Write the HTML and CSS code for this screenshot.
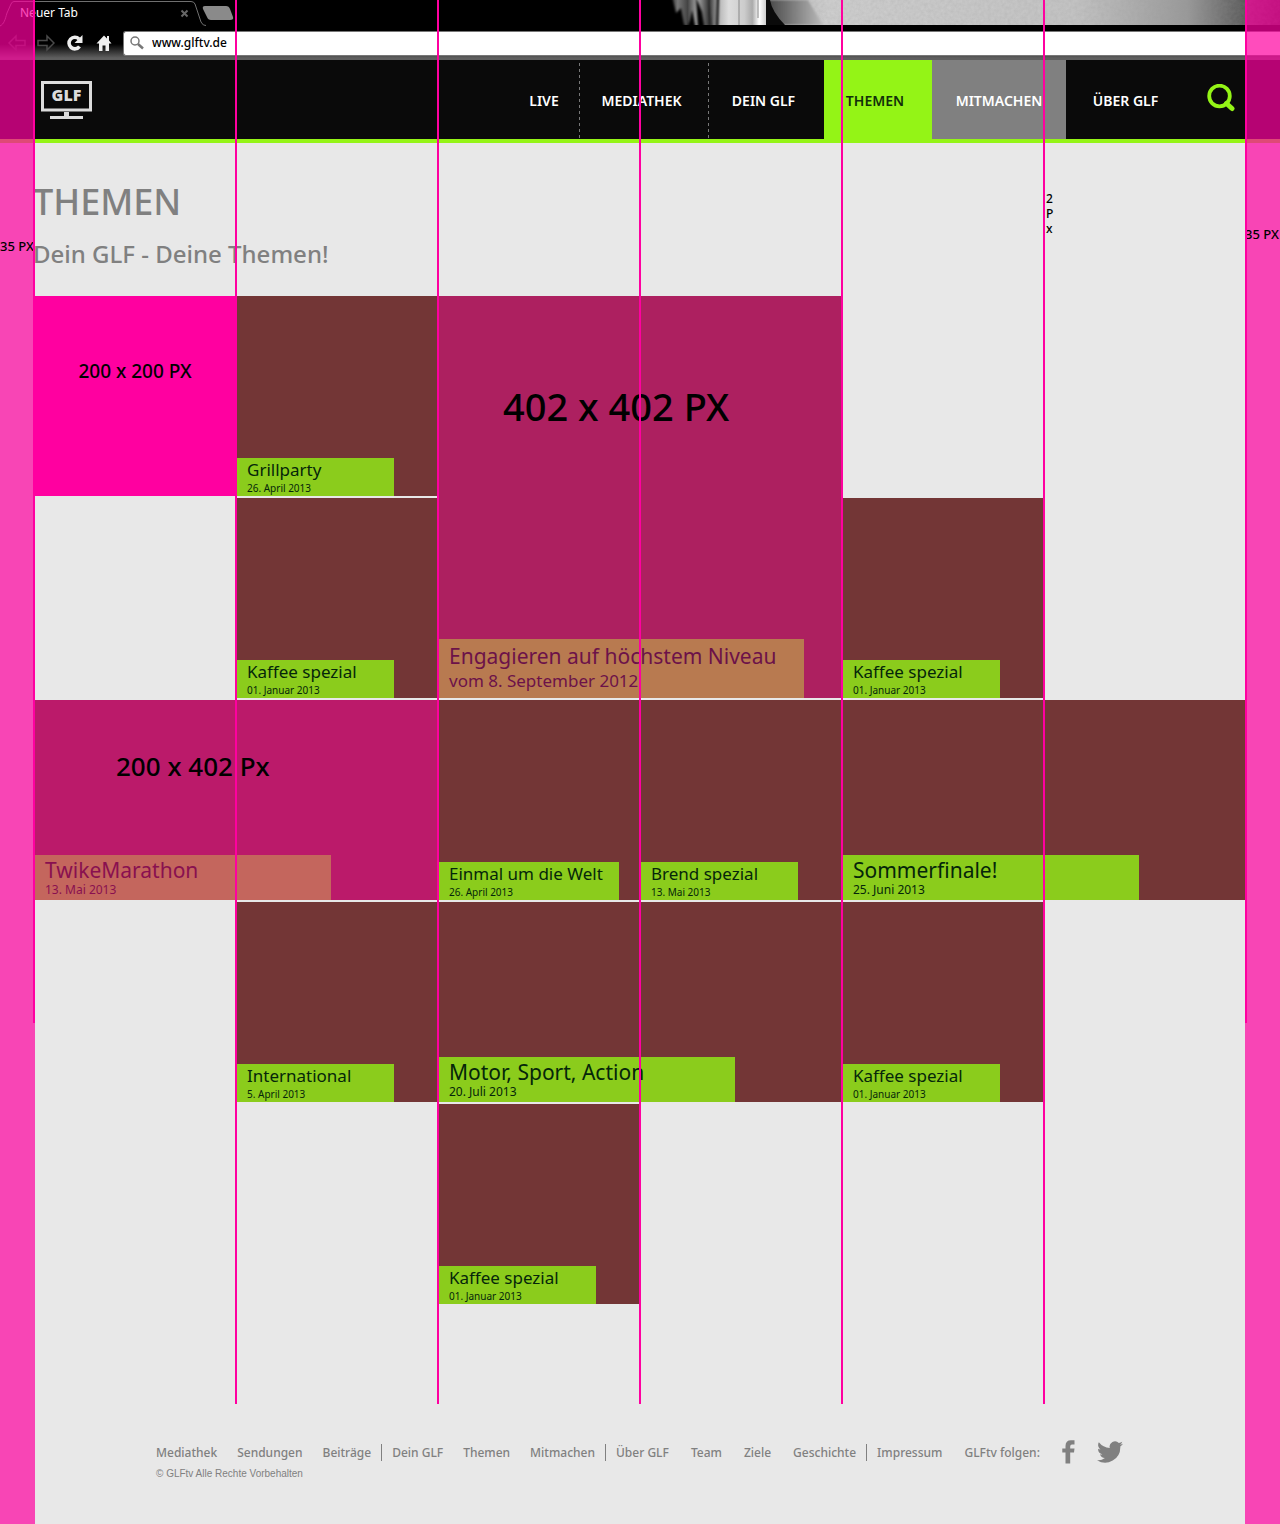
FILE: index.html
```html
<!DOCTYPE html>
<html lang="de">
<head>
<meta charset="utf-8">
<meta name="viewport" content="width=device-width, initial-scale=1">
<title>GLFtv – Themen</title>
<link rel="stylesheet" href="styles.css">
</head>
<body>
<div class="page">
  <div class="browser">
    <div class="tabs">
      <svg class="tab-shape" width="236" height="30" viewBox="0 0 236 30" aria-hidden="true">
        <path d="M0 26C4 24 5 20 7 13L11 4Q12 1.500 14 1.500H191Q194 1.500 195 4L201 22Q203 26 206 25.500" fill="none" stroke="#6f6f6f"/>
        <path d="M205 6H226Q229 6 230 9L233 17Q234 20 230 20H211Q208 20 207 17L203 9Q202 6 205 6Z" fill="#8a8a8a"/>
        <path d="M181.500 10.500l6 6M187.500 10.500l-6 6" stroke="#666" stroke-width="2"/>
      </svg>
      <span class="tab-title">Neuer Tab</span>
      <svg class="theme-art" width="612" height="25" viewBox="0 0 612 25" preserveAspectRatio="none" aria-hidden="true">
        <defs>
          <linearGradient id="wall"><stop offset="0" stop-color="#b4b4b4"/><stop offset=".12" stop-color="#cfcfcf"/><stop offset=".6" stop-color="#c4c4c4"/><stop offset=".82" stop-color="#999"/><stop offset=".94" stop-color="#555"/><stop offset="1" stop-color="#333"/></linearGradient>
          <linearGradient id="hair"><stop offset="0" stop-color="#111"/><stop offset=".1" stop-color="#777"/><stop offset=".2" stop-color="#444"/><stop offset=".3" stop-color="#aaa"/><stop offset=".42" stop-color="#333"/><stop offset=".47" stop-color="#777"/><stop offset=".53" stop-color="#bbb"/><stop offset=".62" stop-color="#ddd"/><stop offset=".78" stop-color="#ccc"/><stop offset=".86" stop-color="#aaa"/><stop offset=".93" stop-color="#fff"/><stop offset="1" stop-color="#ccc"/></linearGradient>
          <linearGradient id="shade"><stop offset="0" stop-color="#444"/><stop offset="1" stop-color="#bbb"/></linearGradient>
          <filter id="grain" x="0" y="0" width="1" height="1"><feTurbulence type="fractalNoise" baseFrequency=".3" numOctaves="2"/><feColorMatrix values="0 0 0 0 .3  0 0 0 0 .3  0 0 0 0 .3  .6 0 0 0 -.1"/></filter>
          <filter id="soft"><feGaussianBlur stdDeviation="1"/></filter>
        </defs>
        <path d="M98 0H612V25H98Z" fill="url(#wall)"/>
        <path d="M98 0H612V25H98Z" filter="url(#grain)" opacity=".5"/>
        <path d="M98 0H140L155 25H108Z" fill="url(#shade)" filter="url(#soft)"/>
        <path d="M0 0H98V25H0Z" fill="url(#hair)"/>
        <path d="M-3 -3H4L8 13L13 8L16 24L20 30H-3ZM18 30L22 20L24 10L28 30ZM30 30L28 -3L34 12L37 30ZM49 -3H51L50 30H48ZM40 -3L44 30H43Z" fill="#000" filter="url(#soft)"/>
        <path d="M71 0V25M90 0V18" stroke="#888"/>
        <path d="M98 0H102Q104 12 117 25H98Z" fill="#0a0a0a"/>
      </svg>
    </div>
    <div class="toolbar">
      <button class="tool" aria-label="Zurück"><svg width="18" height="18" viewBox="0 0 18 18"><path d="M1 9L8 2V6.500H17V11.500H8V16Z" fill="none" stroke="#3a3a3a" stroke-width="1.500"/></svg></button>
      <button class="tool" aria-label="Vorwärts"><svg width="18" height="18" viewBox="0 0 18 18"><path d="M17 9L10 2V6.500H1V11.500H10V16Z" fill="none" stroke="#4a4a4a" stroke-width="1.500"/></svg></button>
      <button class="tool" aria-label="Neu laden"><svg width="18" height="18" viewBox="0 0 18 18"><path d="M13.500 12.500A5.800 5.800 0 1 1 13 5" fill="none" stroke="#eee" stroke-width="3.600"/><path d="M16.500 1V9H8.500Z" fill="#eee"/></svg></button>
      <button class="tool" aria-label="Startseite"><svg width="18" height="18" viewBox="0 0 18 18"><path d="M9 1.500L1.500 9.500H4V17H7.500V11.500H10.500V17H14V9.500H16.500L14 6.500V2H12V4.500Z" fill="#eee"/></svg></button>
      <div class="address">
        <svg width="14" height="14" viewBox="0 0 14 14" aria-hidden="true"><circle cx="5" cy="5" r="4" fill="none" stroke="#777" stroke-width="1.500"/><path d="M8 8l5 4.500" stroke="#777" stroke-width="2.500"/></svg>
        <input type="text" aria-label="Adresse" value="www.glftv.de">
      </div>
    </div>
  </div>

  <header class="header">
    <a class="logo" href="#" aria-label="GLF Startseite">
      <svg width="51" height="39" viewBox="0 0 51 39"><rect x="1.500" y="1.500" width="48" height="27.500" fill="none" stroke="#dcdcdc" stroke-width="3"/><path d="M23 31h5v4h14v3H9v-3h14z" fill="#dcdcdc"/><text x="25.500" y="20" text-anchor="middle" class="logo-text">GLF</text></svg>
    </a>
    <nav class="nav" aria-label="Hauptmenü">
      <a class="nav-live" href="#">LIVE</a>
      <a class="nav-media" href="#">MEDIATHEK</a>
      <a class="nav-own" href="#">DEIN GLF</a>
      <a class="nav-topics" href="#" aria-current="page">THEMEN</a>
      <a class="nav-join" href="#">MITMACHEN</a>
      <a class="nav-about" href="#">ÜBER GLF</a>
    </nav>
    <button class="search" aria-label="Suche"><svg width="28" height="28" viewBox="0 0 28 28"><circle cx="12.500" cy="12" r="10.300" fill="none" stroke="#94f416" stroke-width="3.800"/><path d="M19.500 19.500l5.500 5" stroke="#94f416" stroke-width="5" stroke-linecap="round"/></svg></button>
  </header>

  <main class="main">
    <h1>THEMEN</h1>
    <p class="lead">Dein GLF - Deine Themen!</p>
    <div class="grid">
      <div class="tile spec c1 r1"><span class="size size-s">200 x 200 PX</span></div>
      <a class="tile c2 r1" href="#"><div class="caption"><h2>Grillparty</h2><time>26. April 2013</time></div></a>
      <a class="tile big c3 r1" href="#"><span class="size size-l">402 x 402 PX</span><div class="caption"><h2>Engagieren auf höchstem Niveau</h2><time>vom 8. September 2012</time></div></a>
      <a class="tile c2 r2" href="#"><div class="caption"><h2>Kaffee spezial</h2><time>01. Januar 2013</time></div></a>
      <a class="tile c5 r2" href="#"><div class="caption"><h2>Kaffee spezial</h2><time>01. Januar 2013</time></div></a>
      <a class="tile wide tinted c1 r3" href="#"><span class="size size-m">200 x 402 Px</span><div class="caption"><h2>TwikeMarathon</h2><time>13. Mai 2013</time></div></a>
      <a class="tile c3 r3" href="#"><div class="caption caption-long"><h2>Einmal um die Welt</h2><time>26. April 2013</time></div></a>
      <a class="tile c4 r3" href="#"><div class="caption"><h2>Brend spezial</h2><time>13. Mai 2013</time></div></a>
      <a class="tile wide c5 r3" href="#"><div class="caption"><h2>Sommerfinale!</h2><time>25. Juni 2013</time></div></a>
      <a class="tile c2 r4" href="#"><div class="caption"><h2>International</h2><time>5. April 2013</time></div></a>
      <a class="tile wide c3 r4" href="#"><div class="caption"><h2>Motor, Sport, Action</h2><time>20. Juli 2013</time></div></a>
      <a class="tile c5 r4" href="#"><div class="caption"><h2>Kaffee spezial</h2><time>01. Januar 2013</time></div></a>
      <a class="tile c3 r5" href="#"><div class="caption"><h2>Kaffee spezial</h2><time>01. Januar 2013</time></div></a>
    </div>
  </main>

  <footer class="footer">
    <div class="footer-row">
      <nav class="links" aria-label="Fußzeile">
        <div class="group"><a href="#">Mediathek</a><a href="#">Sendungen</a><a href="#">Beiträge</a></div>
        <div class="group"><a href="#">Dein GLF</a><a href="#">Themen</a><a href="#">Mitmachen</a></div>
        <div class="group roomy"><a href="#">Über GLF</a><a href="#">Team</a><a href="#">Ziele</a><a href="#">Geschichte</a></div>
        <div class="group roomy"><a href="#">Impressum</a><span>GLFtv folgen:</span></div>
      </nav>
      <a class="social" href="#" aria-label="Facebook"><svg width="13" height="24" viewBox="0 0 13 24"><path d="M12.500 .3V4.500H10Q8.200 4.500 8.200 6.500V8.500H12.500L12 12.500H8.200V23.500H3.500V12.500H.3V8.500H3.500V6Q3.500 .3 9 .3Z" fill="#808080"/></svg></a>
      <a class="social" href="#" aria-label="Twitter"><svg width="26" height="22" viewBox="0 2 24 20" preserveAspectRatio="none"><path d="M24 4.600a10 10 0 0 1-2.800.8 5 5 0 0 0 2.100-2.700 10 10 0 0 1-3.100 1.200 4.900 4.900 0 0 0-8.400 4.500A14 14 0 0 1 1.700 3.200a4.900 4.900 0 0 0 1.500 6.500 5 5 0 0 1-2.200-.6 4.900 4.900 0 0 0 3.900 4.900 5 5 0 0 1-2.200.1 4.900 4.900 0 0 0 4.600 3.400A9.900 9.900 0 0 1 0 19.500a14 14 0 0 0 21.500-12.400A10 10 0 0 0 24 4.600z" fill="#808080"/></svg></a>
    </div>
    <p class="copyright">© GLFtv Alle Rechte Vorbehalten</p>
  </footer>

  <div class="margin margin-left"><span>35 PX</span></div>
  <div class="margin margin-right"><span>35 PX</span></div>
  <div class="guides">
    <i class="guide short"></i><i class="guide"></i><i class="guide"></i><i class="guide"></i><i class="guide"></i><i class="guide"><span class="gutter-note">2<br>P<br>x</span></i><i class="guide short"></i>
  </div>
</div>
</body>
</html>
```
FILE: styles.css
```css
* { box-sizing: border-box; }

body {
  margin: 0;
  background: #e8e8e8;
  color: #000;
  font-family: "Noto Sans", sans-serif;
}

h1, h2, p { margin: 0; font-weight: 400; }
a { color: inherit; text-decoration: none; }
button { padding: 0; border: 0; background: none; cursor: pointer; }
svg { display: block; }

.page { position: relative; overflow: hidden; }

/* Browser chrome */
.browser { background: linear-gradient(#000 44px, #5f5f5f 58px); }
.tabs { display: flex; justify-content: space-between; position: relative; height: 30px; background: #000; }
.tab-title { position: absolute; left: 20px; top: 5px; color: #fff; font-size: 12px; line-height: 16px; }
.toolbar { display: flex; align-items: center; height: 30px; padding-left: 8px; }
.tool { width: 18px; height: 18px; margin: 0 11px 4px 0; }
.address {
  flex: 1;
  display: flex;
  align-items: center;
  gap: 8px;
  height: 25px;
  margin: 0 0 4px -1px;
  padding-left: 6px;
  background: #fff;
  border: 1px solid #777;
  border-right: 0;
  border-radius: 3px 0 0 3px;
}
.address input { flex: 1; min-width: 0; padding: 0; border: 0; outline: 0; background: none; font: 500 12px/16px "Noto Sans", sans-serif; color: #000; }

/* Site header */
.header { display: flex; height: 83px; padding: 0 45px 0 41px; background: #0a0a0a; border-bottom: 4px solid #94f416; }
.logo { margin: 21px auto 0 0; }
.logo-text { font: 900 16px "Noto Sans", sans-serif; fill: #dcdcdc; }
.nav { display: flex; color: #fff; font-size: 14px; font-weight: 600; line-height: 20px; }
.nav a { display: flex; align-items: center; justify-content: center; padding-top: 3px; }
.nav-live { width: 72px; }
.nav-media { width: 129px; }
.nav-live, .nav-media {
  background: repeating-linear-gradient(#777 0 3px, transparent 3px 6px) right 0 top 3px / 1px 100% no-repeat;
}
.nav-own { width: 115px; }
.nav-topics { width: 108px; background: #94f416; color: #12300a; }
.nav .nav-media, .nav .nav-own, .nav .nav-topics { padding-right: 6px; }
.nav-join { width: 134px; background: #808080; }
.nav-about { width: 119px; }
.search { align-self: flex-start; margin: 24px 0 0 22px; }

/* Content */
.main { padding: 35px 35px 0; color: #808080; }
h1 { font-size: 36px; font-weight: 500; line-height: 48px; }
.lead { margin-top: 12px; font-size: 24px; font-weight: 500; line-height: 32px; }
h1, .lead { margin-left: -2px; }
.grid { display: grid; grid-template-columns: repeat(6, 1fr); grid-auto-rows: 200px; gap: 2px; margin-top: 26px; }

.tile { display: flex; flex-direction: column; align-items: flex-start; background: #733636; color: #05260a; }
.c1 { grid-column-start: 1; }
.c2 { grid-column-start: 2; }
.c3 { grid-column-start: 3; }
.c4 { grid-column-start: 4; }
.c5 { grid-column-start: 5; }
.r1 { grid-row-start: 1; }
.r2 { grid-row-start: 2; }
.r3 { grid-row-start: 3; }
.r4 { grid-row-start: 4; }
.r5 { grid-row-start: 5; }
.wide, .big { grid-column-end: span 2; }
.big { grid-row-end: span 2; background: #ad2060; color: #6c1249; }
.tinted { background: #bb1a6a; color: #891050; }
.spec { background: #ff00a0; }

.caption { width: 157px; height: 38px; margin-top: auto; padding: 1px 0 0 10px; background: #8bcc1c; white-space: nowrap; }
.caption h2 { font-size: 17px; line-height: 22px; }
.caption time { display: block; font-size: 10px; line-height: 14px; }
.caption-long { width: 180px; }
.wide .caption { width: 296px; height: 45px; }
.wide .caption h2, .big .caption h2 { font-size: 21px; line-height: 28px; }
.wide .caption time { font-size: 12px; line-height: 12px; }
.big .caption { width: 365px; height: 59px; padding-top: 3px; background: #b87a50; }
.big .caption time { font-size: 17px; line-height: 22px; }
.tinted .caption { background: #c4665d; }

.size { color: #000; font-weight: 500; }
.size-s { align-self: center; margin-top: 63px; font-size: 19px; line-height: 24px; }
.size-m { margin: 50px 0 0 81px; font-size: 26px; line-height: 32px; }
.size-l { margin: 86px 0 0 64px; font-size: 38px; line-height: 48px; }

/* Footer */
.footer { padding: 136px 140px 43px 156px; color: #808080; }
.footer-row { display: flex; align-items: center; gap: 22px; }
.links { display: flex; font-size: 12px; font-weight: 500; line-height: 17px; white-space: nowrap; }
.group { display: flex; gap: 20px; padding: 0 10px; border-left: 1px solid #808080; }
.roomy { gap: 22px; }
.group:first-child { padding-left: 0; border-left: 0; }
.group:last-child { padding-right: 0; }
.copyright { margin-top: 2px; font: 10px/16px "Liberation Sans", sans-serif; }

/* Layout guides laid over the page */
.margin { position: absolute; top: 0; bottom: 0; width: 35px; background: rgba(255, 0, 160, .7); font-size: 13px; font-weight: 500; line-height: 16px; white-space: nowrap; pointer-events: none; }
.margin-left { left: 0; padding-top: 238px; }
.margin-right { right: 0; padding-top: 226px; }
.guides { position: absolute; top: 0; left: 33px; right: 33px; display: flex; justify-content: space-between; pointer-events: none; }
.guide { position: relative; width: 2px; height: 1404px; background: #ff00a0; font-style: normal; }
.guide.short { height: 1023px; }
.gutter-note { position: absolute; left: 3px; top: 191px; font-size: 12px; font-weight: 500; line-height: 15px; }
```
